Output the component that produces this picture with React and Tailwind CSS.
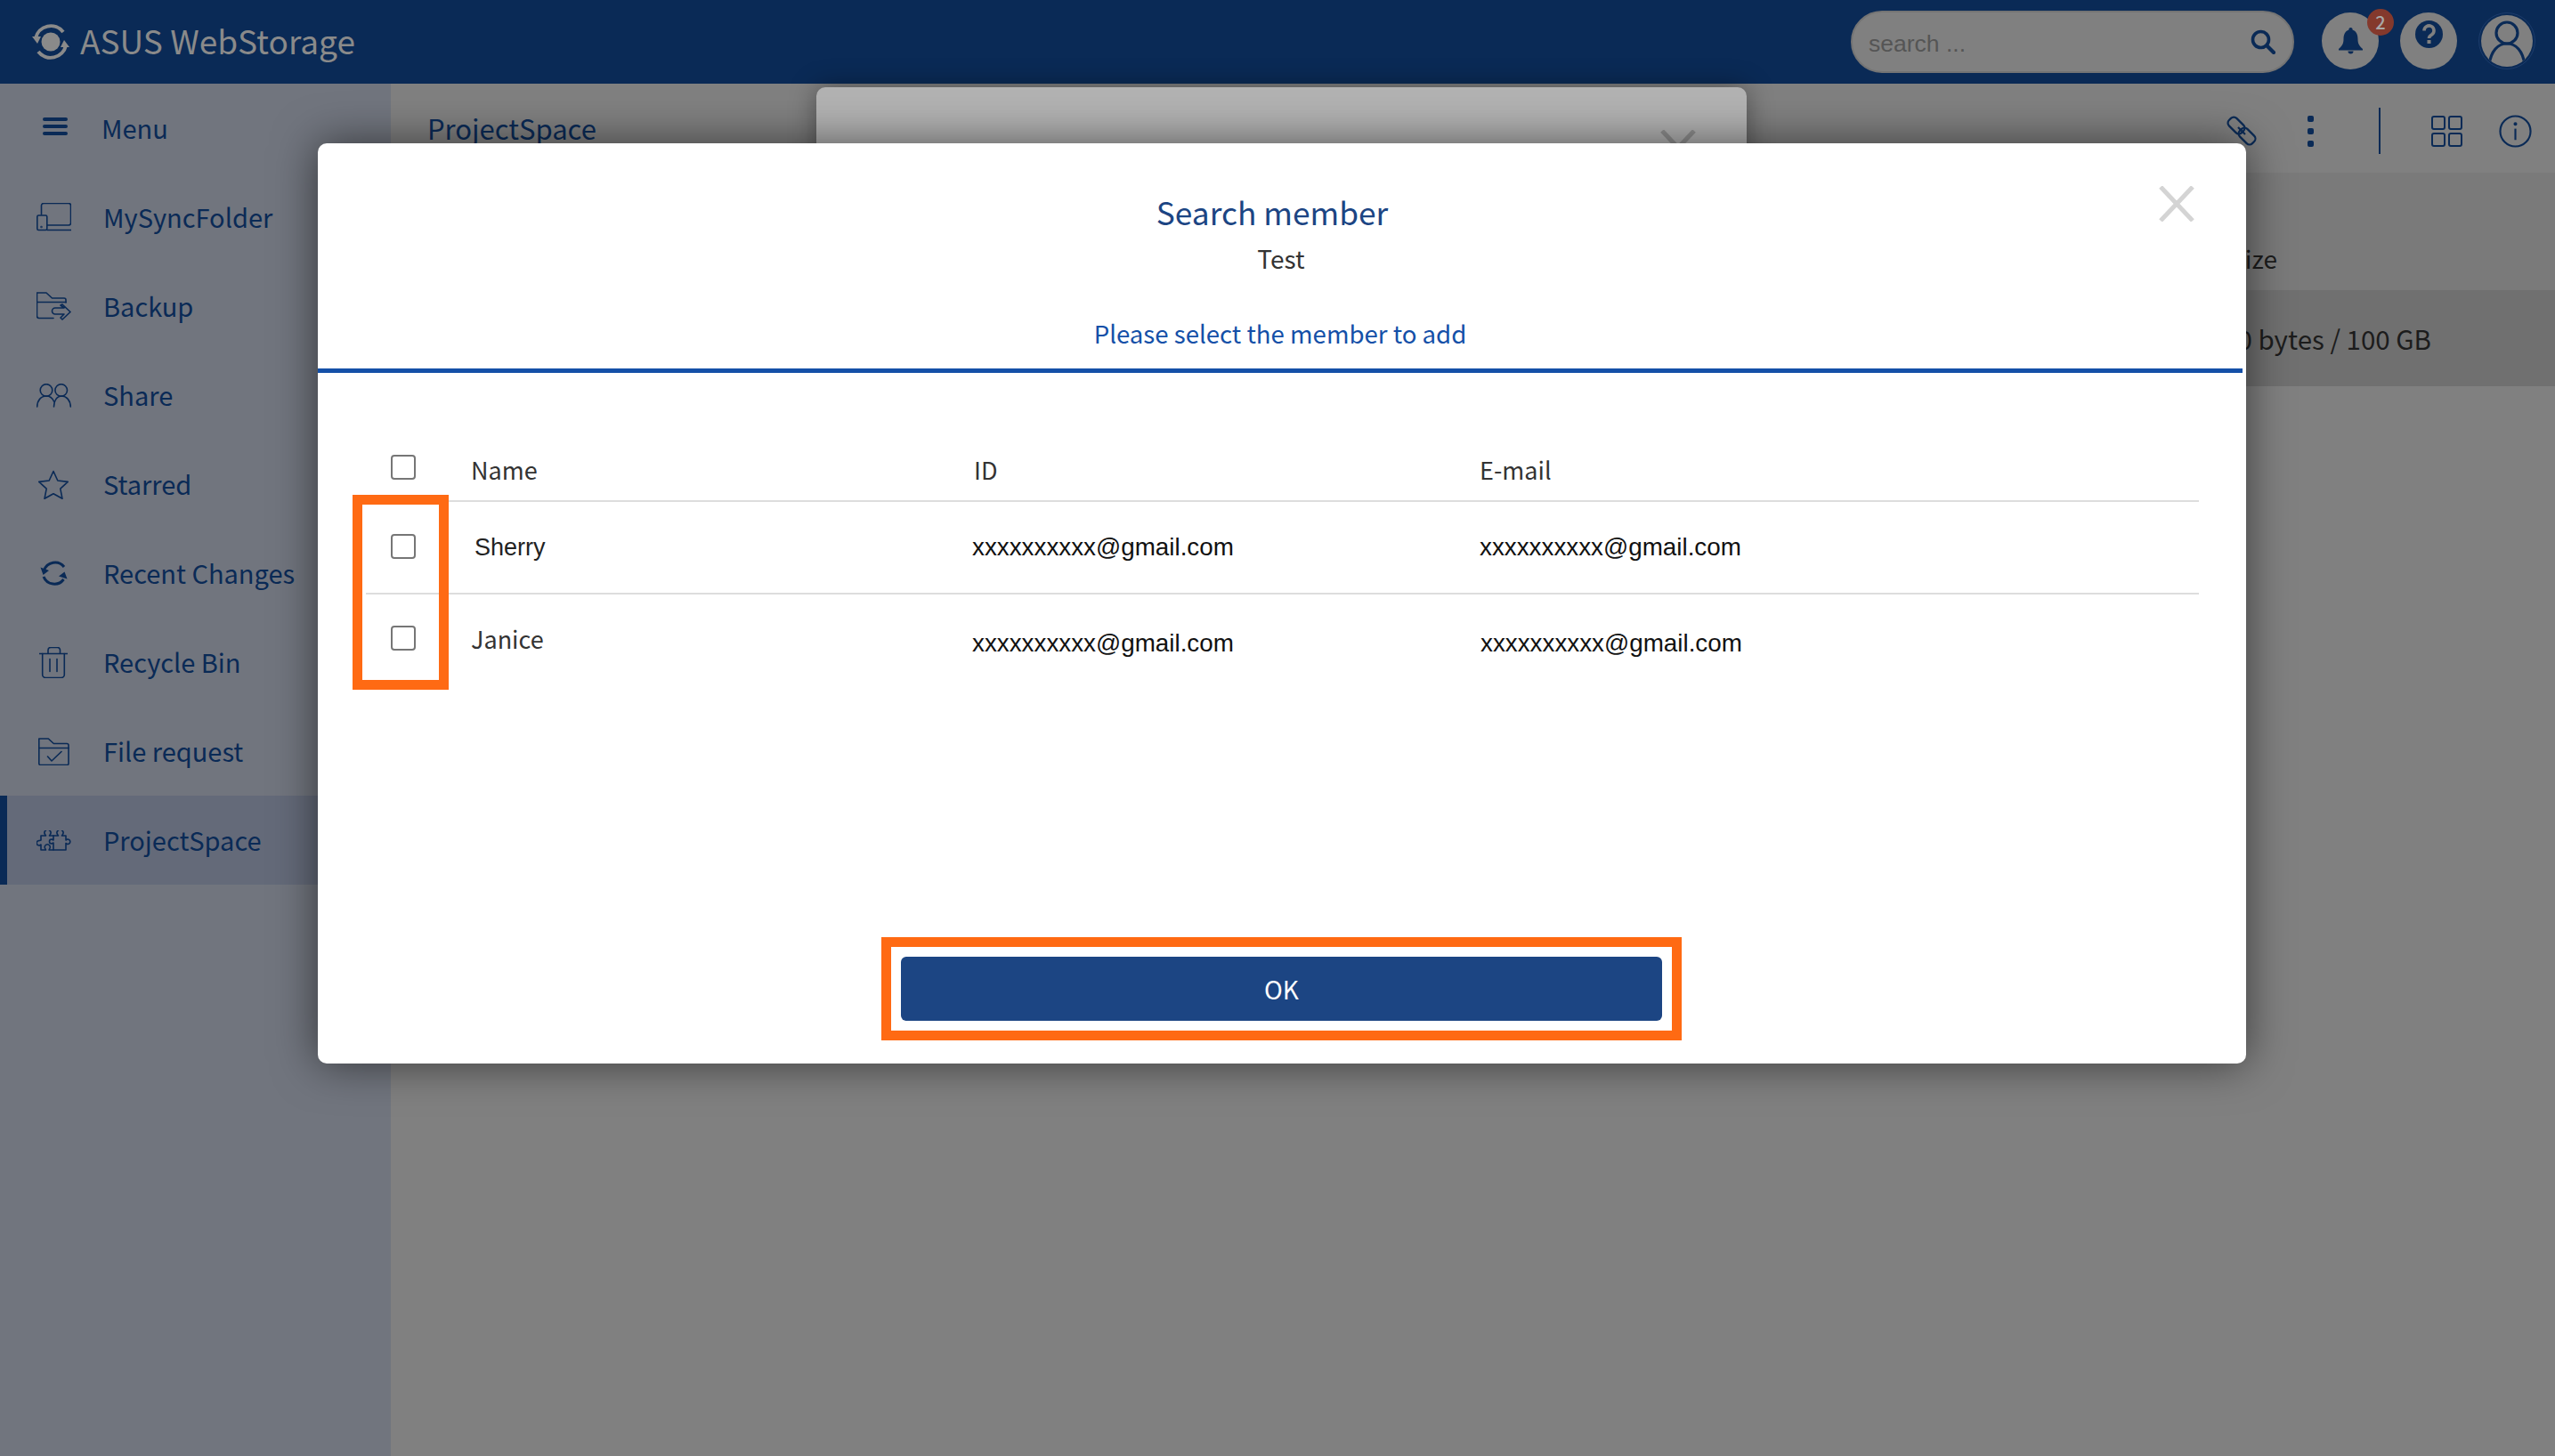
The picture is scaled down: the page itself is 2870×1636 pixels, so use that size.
import React from 'react';

const stroke = { fill: 'none', stroke: 'currentColor', strokeWidth: 1.6, strokeLinecap: 'round', strokeLinejoin: 'round' };

const Logo = () => (
  <svg width="44" height="44" viewBox="0 0 44 44" className="text-[#8a8a8a]">
    <circle cx="22" cy="22" r="10.500" fill="currentColor" />
    <path d="M5 18A17.500 17.500 0 0 1 36 11" fill="none" stroke="currentColor" strokeWidth="4" />
    <path d="M39 26A17.500 17.500 0 0 1 8 33" fill="none" stroke="currentColor" strokeWidth="4" />
    <path d="M1 16h10l-4 8zM43 28H33l4-8z" fill="currentColor" />
  </svg>
);

const SyncIcon = () => (
  <svg width="39" height="32" viewBox="0 0 39 32" style={stroke}>
    <path d="M5.500 13V3a2.500 2.500 0 0 1 2.500-2.500h28a2.500 2.500 0 0 1 2.500 2.500v19.500a2.500 2.500 0 0 1-2.500 2.500H12" />
    <path d="M12 30.500h26.500" />
    <rect x="0.800" y="14" width="11" height="16.500" rx="1.500" />
    <circle cx="5.500" cy="27" r="0.400" />
  </svg>
);
const BackupIcon = () => (
  <svg width="39" height="33" viewBox="0 0 39 33" style={stroke}>
    <path d="M19 29.500H3a2.500 2.500 0 0 1-2.500-2.500V1H11l6.500 6H31a2 2 0 0 1 2 2v3" />
    <path d="M.5 11.500H33" />
    <path d="M29 14l9 8.500-9 8.500-2-2 4-4h-10a3.500 3.500 0 0 1 0-7h10l-4-3z" />
  </svg>
);
const ShareIcon = () => (
  <svg width="39" height="27" viewBox="0 0 39 27" style={stroke}>
    <circle cx="11" cy="7.500" r="6.800" />
    <circle cx="27.700" cy="7.500" r="6.800" />
    <path d="M.7 26C.7 19 5 14 11 14c4 0 7 2.500 8.500 6" />
    <path d="M19.500 26C19.500 19 23 14 28.500 14c5 0 9.800 5 9.800 12" />
  </svg>
);
const StarIcon = () => (
  <svg width="34" height="33" viewBox="0 0 34 33" style={stroke}>
    <path d="M17 1.500l4.800 10.500 11.400 1.400-8.400 7.700 2.200 11.200L17 26.700 7 32.300l2.200-11.200L.8 13.400 12.200 12z" />
  </svg>
);
const RecentIcon = () => (
  <svg width="31" height="30" viewBox="0 0 31 30">
    <path d="M27 8A13 13 0 0 0 4.500 12M4 19a13 13 0 0 0 22.500 3" fill="none" stroke="currentColor" strokeWidth="3" />
    <path d="M.5 8.500l9.500 3.500-6.500 5zM30.500 21.500L21 18.500l6.500-5z" fill="currentColor" />
  </svg>
);
const BinIcon = () => (
  <svg width="32" height="35" viewBox="0 0 32 35" style={stroke}>
    <path d="M.5 7.500h31" />
    <path d="M10 7V3.500a3 3 0 0 1 3-3h7.500a3 3 0 0 1 3 3V7" />
    <path d="M3.700 7.500V31a3.500 3.500 0 0 0 3.500 3.500h17.600a3.500 3.500 0 0 0 3.500-3.500V7.500" />
    <path d="M12 13.500v14M20 13.500v14" />
  </svg>
);
const RequestIcon = () => (
  <svg width="35" height="31" viewBox="0 0 35 31" style={stroke}>
    <path d="M.8 29V1h10.500l6 5.500H32a2 2 0 0 1 2 2V29a1.500 1.500 0 0 1-1.500 1.500h-30A1.500 1.500 0 0 1 .8 29z" />
    <path d="M.8 11.500H34" />
    <path d="M10.500 21l4.500 5 11-10.500" />
  </svg>
);
const PuzzleIcon = () => (
  <svg width="39" height="23" viewBox="0 0 39 23" style={stroke}>
    <path d="M5 6h5.500L9.500 4.500a3.500 3.500 0 1 1 6 0L14.500 6H19v5l-2-1a2.500 2.500 0 1 0 0 5l2-1v8h-5l1-2a3 3 0 1 0-5.500 0l1 2H5v-6l-1.500 1a2.800 2.800 0 1 1 0-5.500L5 11z" />
    <path d="M19 6h5.500l-1-1.500a3.500 3.500 0 1 1 6 0L28.500 6H33v5l1.500-1a2.800 2.800 0 1 1 0 5.500L33 14.500V22H19" />
  </svg>
);

const NAV = [
  { label: 'MySyncFolder', icon: <SyncIcon /> },
  { label: 'Backup', icon: <BackupIcon /> },
  { label: 'Share', icon: <ShareIcon /> },
  { label: 'Starred', icon: <StarIcon /> },
  { label: 'Recent Changes', icon: <RecentIcon /> },
  { label: 'Recycle Bin', icon: <BinIcon /> },
  { label: 'File request', icon: <RequestIcon /> },
  { label: 'ProjectSpace', icon: <PuzzleIcon />, active: true },
];

const Header = () => (
  <header className="h-[94px] shrink-0 bg-[#0a2a56] flex items-center pl-[35px] pr-[22px]">
    <Logo />
    <span className="ml-[11px] text-[37px] leading-none text-[#8a8a8a] -mt-[4px]">ASUS WebStorage</span>
    <div className="ml-auto flex items-center">
      <div className="w-[498px] h-[70px] rounded-full bg-[#808080] border-2 border-[#747474] flex items-center pl-[18px] pr-[19px]">
        <span className="text-[26.500px] text-[#555] mt-[6px] font-['Liberation_Sans',sans-serif]">search ...</span>
        <svg className="ml-auto text-[#0a2a56]" width="28" height="28" viewBox="0 0 28 28" fill="none" stroke="currentColor">
          <circle cx="11.500" cy="11.500" r="9" strokeWidth="3.600" />
          <path d="M18.500 18.500l7.500 7.500" strokeWidth="4.200" strokeLinecap="round" />
        </svg>
      </div>
      <div className="relative ml-[31px] w-[64px] h-[64px] rounded-full bg-[#808080] flex items-center justify-center -mt-[2px]">
        <svg width="27" height="30" viewBox="0 0 27 30" className="text-[#0a2a56]" fill="currentColor">
          <path d="M13.500 0a2 2 0 0 1 2 2.500C20 4 21.500 8 21.500 13c0 5 1.500 7.500 5.500 11v1.500H0V24c4-3.500 5.500-6 5.500-11 0-5 1.500-9 6-10.500a2 2 0 0 1 2-2.500z" />
          <path d="M10.500 26.500h6a3 3 0 0 1-6 0z" />
        </svg>
        <span className="absolute -top-[4px] -right-[17px] w-[30px] h-[30px] rounded-full bg-[#84392c] flex items-center justify-center text-[20px] text-[#a8a8a8] leading-none font-medium">2</span>
      </div>
      <div className="ml-[24px] w-[64px] h-[64px] rounded-full bg-[#808080] flex justify-center pt-[9px] -mt-[2px]">
        <svg width="31" height="31" viewBox="0 0 31 31">
          <circle cx="15.500" cy="15.500" r="15.500" fill="#0a2a56" />
          <path d="M10 11.500a5.500 5.500 0 1 1 8.500 4.500c-2 1.300-3 2-3 4" fill="none" stroke="#808080" strokeWidth="3.600" />
          <rect x="13.500" y="22" width="4" height="4" fill="#808080" />
        </svg>
      </div>
      <div className="ml-[24px] w-[64px] h-[64px] rounded-full border border-[#1c3c6c] flex items-center justify-center -mt-[2px]">
        <div className="w-[58px] h-[58px] rounded-full bg-[#808080] overflow-hidden">
          <svg width="58" height="58" viewBox="0 0 58 58" fill="none" stroke="#0a2a56" strokeWidth="3.200">
            <circle cx="29" cy="20" r="12" />
            <path d="M9 56C11 40 19 32 29 32s18 8 20 24" />
          </svg>
        </div>
      </div>
    </div>
  </header>
);

const Sidebar = () => (
  <aside className="w-[439px] shrink-0 bg-[#71757e]">
    <div className="h-[100px] flex items-center pl-[48px] gap-[38px]">
      <div className="w-[28px] flex flex-col gap-[4px] -mt-[4px]">
        <div className="h-[4px] bg-[#0a2a56] rounded-full" />
        <div className="h-[4px] bg-[#0a2a56] rounded-full" />
        <div className="h-[4px] bg-[#0a2a56] rounded-full" />
      </div>
      <span className="text-[29px] text-[#0a2a56]">Menu</span>
    </div>
    {NAV.map((item) => (
      <div
        key={item.label}
        className={`h-[100px] flex items-center border-l-[8px] ${item.active ? 'border-[#0a2a56] bg-[#646a79]' : 'border-transparent'}`}
      >
        <div className="w-[108px] pl-[12px] pr-[16px] flex items-center justify-center text-[#0a2a56]">{item.icon}</div>
        <span className="text-[29px] text-[#0a2a56]">{item.label}</span>
      </div>
    ))}
  </aside>
);

const Main = () => (
  <main className="flex-1 bg-[#808080] flex flex-col">
    <div className="h-[100px] flex items-center pl-[41px] pr-[26px]">
      <span className="text-[31px] text-[#0a2a56]">ProjectSpace</span>
      <div className="ml-auto flex items-center pt-[6px]">
        <svg width="36" height="36" viewBox="0 0 36 36" fill="none" stroke="#0a2a56" strokeWidth="2.200">
          <rect x="2" y="6" width="20" height="12" rx="4.500" transform="rotate(45 12 12)" />
          <rect x="14" y="18" width="20" height="12" rx="4.500" transform="rotate(45 24 24)" />
          <path d="M14 14l8 8" />
        </svg>
        <div className="ml-[56px] flex flex-col gap-[7px]">
          <div className="w-[7px] h-[7px] rounded-[2px] bg-[#0a2a56]" />
          <div className="w-[7px] h-[7px] rounded-[2px] bg-[#0a2a56]" />
          <div className="w-[7px] h-[7px] rounded-[2px] bg-[#0a2a56]" />
        </div>
        <div className="ml-[73px] w-[2px] h-[52px] bg-[#0a2a56]" />
        <div className="ml-[57px] grid grid-cols-2 gap-[3px]">
          <div className="w-[16px] h-[16px] border-2 border-[#0a2a56] rounded-[3px]" />
          <div className="w-[16px] h-[16px] border-2 border-[#0a2a56] rounded-[3px]" />
          <div className="w-[16px] h-[16px] border-2 border-[#0a2a56] rounded-[3px]" />
          <div className="w-[16px] h-[16px] border-2 border-[#0a2a56] rounded-[3px]" />
        </div>
        <svg className="ml-[41px]" width="37" height="37" viewBox="0 0 38 38" fill="none" stroke="#0a2a56" strokeWidth="2.200">
          <circle cx="19" cy="19" r="17.500" />
          <path d="M19 16v13" />
          <circle cx="19" cy="10.500" r="1" fill="#0a2a56" />
        </svg>
      </div>
    </div>
    <div className="h-[132px] bg-[#7a7a7a] flex justify-end pr-[312px] pt-[82px]">
      <span className="text-[28px] text-[#1c1c1c] leading-none">Size</span>
    </div>
    <div className="h-[108px] bg-[#707070] flex items-center justify-end pr-[139px]">
      <span className="text-[29.500px] text-[#1c1c1c]">0 bytes / 100 GB</span>
    </div>
  </main>
);

const Checkbox = () => (
  <div className="w-[28px] h-[28px] rounded-[4px] border-2 border-[#767676] bg-white" />
);

const EMAIL = 'xxxxxxxxxx@gmail.com';
const COLS = 'grid grid-cols-[118px_565px_568px_1fr]';

const MemberTable = () => (
  <div className="pl-[54px] pr-[49px] text-[27px]">
    <div className={`${COLS} h-[145px] border-b-2 border-[#ddd] items-end text-[#333]`}>
      <div className="pl-[28px] pb-[23px]"><Checkbox /></div>
      <div className="leading-[40px] pb-[14px]">Name</div>
      <div className="leading-[40px] pb-[14px]">ID</div>
      <div className="leading-[40px] pb-[14px]">E-mail</div>
    </div>
    <div className={`${COLS} h-[104px] border-b-2 border-[#ddd] items-center text-[#222]`}>
      <div className="pl-[28px] -mt-[3px]"><Checkbox /></div>
      <div className="pl-[4px] font-['Liberation_Sans',sans-serif]">Sherry</div>
      <div className="-ml-[2px] text-[27.800px] text-[#111] font-['Liberation_Sans',sans-serif]">{EMAIL}</div>
      <div className="text-[27.800px] text-[#111] font-['Liberation_Sans',sans-serif]">{EMAIL}</div>
    </div>
    <div className={`${COLS} h-[100px] items-center text-[#333]`}>
      <div className="pl-[28px] -mt-[2px]"><Checkbox /></div>
      <div>Janice</div>
      <div className="-ml-[2px] pt-[10px] text-[27.800px] text-[#111] font-['Liberation_Sans',sans-serif]">{EMAIL}</div>
      <div className="ml-[1px] pt-[10px] text-[27.800px] text-[#111] font-['Liberation_Sans',sans-serif]">{EMAIL}</div>
    </div>
  </div>
);

const SearchMemberModal = () => (
  <div className="absolute left-[357px] top-[161px] w-[2166px] h-[1034px] bg-white rounded-[10px] shadow-[0_0_50px_rgba(0,0,0,0.55)] pr-[4px]">
    <button className="absolute right-[58px] top-[48px] text-[#d4d4d4]">
      <svg width="40" height="40" viewBox="0 0 40 40" stroke="currentColor" strokeWidth="5" className="block"><path d="M2 1l36 38M38 1L2 39" /></svg>
    </button>
    <div className="h-[258px] border-b-[5px] border-[#1450a8] flex flex-col items-center">
      <h2 className="mt-[52px] -ml-[18px] text-[35.300px] leading-[50px] text-[#1c4583]">Search member</h2>
      <div className="mt-[7px] ml-[2px] text-[28px] leading-[40px] text-[#333]">Test</div>
      <div className="mt-[43px] text-[27.600px] leading-[42px] text-[#1450a8]">Please select the member to add</div>
    </div>
    <MemberTable />
    <div className="absolute left-[39px] top-[395px] w-[108px] h-[219px] border-[11px] border-[#ff6a13]" />
    <div className="absolute left-[633px] top-[892px] w-[899px] h-[116px] border-[11px] border-[#ff6a13] p-[11px]">
      <button className="w-full h-full bg-[#1c4583] rounded-[6px] text-white text-[28px]">OK</button>
    </div>
  </div>
);

export default function App() {
  return (
    <div className="relative w-[2870px] h-[1636px] overflow-hidden flex flex-col bg-[#808080] font-['Noto_Sans_CJK_SC','Noto_Sans',sans-serif]">
      <Header />
      <div className="flex-1 flex">
        <Sidebar />
        <Main />
      </div>
      <div className="absolute left-[917px] top-[98px] w-[1045px] h-[200px] bg-[#b2b2b2] rounded-[10px] shadow-[0_0_30px_rgba(0,0,0,0.4)]">
        <svg className="absolute right-[57px] top-[48px] text-[#8f8f8f]" width="40" height="40" viewBox="0 0 40 40" stroke="currentColor" strokeWidth="5"><path d="M2 1l36 38M38 1L2 39" /></svg>
      </div>
      <SearchMemberModal />
    </div>
  );
}
